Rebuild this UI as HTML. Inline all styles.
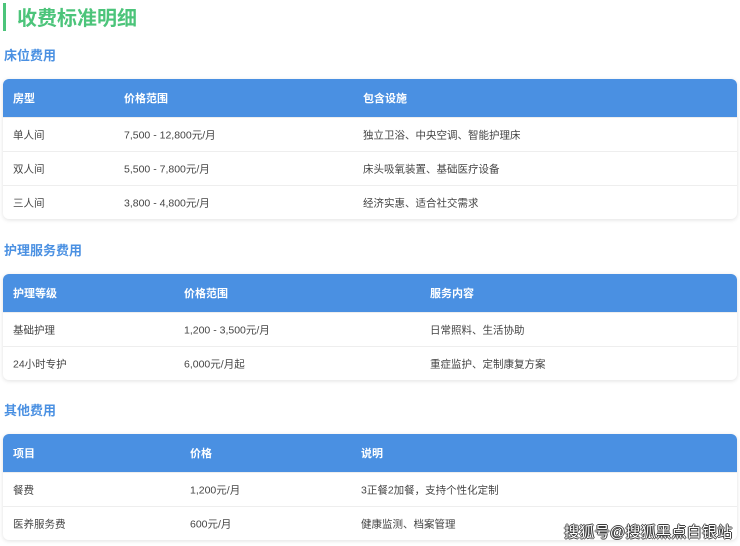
<!DOCTYPE html>
<html><head><meta charset="utf-8"><style>
*{margin:0;padding:0;box-sizing:border-box}
body{width:740px;height:546px;background:#fff;font-family:"Liberation Sans","Noto Sans CJK SC",sans-serif;position:relative;overflow:hidden;color:#333}
.bar{position:absolute;left:3px;top:3px;width:3px;height:28px;background:#4cc47a}
.title{position:absolute;left:17px;top:6px;font-size:20px;font-weight:bold;color:#4cc47a;line-height:26px}
h3{position:absolute;left:4px;font-size:13px;font-weight:bold;color:#4a90e2;line-height:16px}
.tb{position:absolute;left:3px;width:734px;border-radius:6px;overflow:hidden;box-shadow:0 1px 4px rgba(0,0,0,.12);background:#fff}
.row{position:relative;height:34px;border-top:1px solid #eee;font-size:10.5px;color:#444}
.row.h{height:38px;background:#4a90e2;color:#fff;font-weight:bold;border:none;font-size:11px}
.row span{position:absolute;top:50%;transform:translateY(-50%);white-space:nowrap}
.wm{position:absolute;left:564px;top:521px;font-size:15px;color:#fff;text-shadow:0 0 1px #222,1px 0 0 #444,-1px 0 0 #444,0 1px 0 #444,0 -1px 0 #444;letter-spacing:0.3px}
</style></head><body>
<div class="bar"></div><div class="title">收费标准明细</div>
<h3 style="top:48px">床位费用</h3>
<div class="tb" style="top:79px">
<div class="row h"><span style="left:10px">房型</span><span style="left:121px">价格范围</span><span style="left:360px">包含设施</span></div>
<div class="row"><span style="left:10px">单人间</span><span style="left:121px">7,500 - 12,800元/月</span><span style="left:360px">独立卫浴、中央空调、智能护理床</span></div>
<div class="row"><span style="left:10px">双人间</span><span style="left:121px">5,500 - 7,800元/月</span><span style="left:360px">床头吸氧装置、基础医疗设备</span></div>
<div class="row"><span style="left:10px">三人间</span><span style="left:121px">3,800 - 4,800元/月</span><span style="left:360px">经济实惠、适合社交需求</span></div>
</div>
<h3 style="top:243px">护理服务费用</h3>
<div class="tb" style="top:274px">
<div class="row h"><span style="left:10px">护理等级</span><span style="left:181px">价格范围</span><span style="left:427px">服务内容</span></div>
<div class="row"><span style="left:10px">基础护理</span><span style="left:181px">1,200 - 3,500元/月</span><span style="left:427px">日常照料、生活协助</span></div>
<div class="row"><span style="left:10px">24小时专护</span><span style="left:181px">6,000元/月起</span><span style="left:427px">重症监护、定制康复方案</span></div>
</div>
<h3 style="top:403px">其他费用</h3>
<div class="tb" style="top:434px">
<div class="row h"><span style="left:10px">项目</span><span style="left:187px">价格</span><span style="left:358px">说明</span></div>
<div class="row"><span style="left:10px">餐费</span><span style="left:187px">1,200元/月</span><span style="left:358px">3正餐2加餐，支持个性化定制</span></div>
<div class="row"><span style="left:10px">医养服务费</span><span style="left:187px">600元/月</span><span style="left:358px">健康监测、档案管理</span></div>
</div>
<div class="wm">搜狐号@搜狐黑点白银站</div>
</body></html>
